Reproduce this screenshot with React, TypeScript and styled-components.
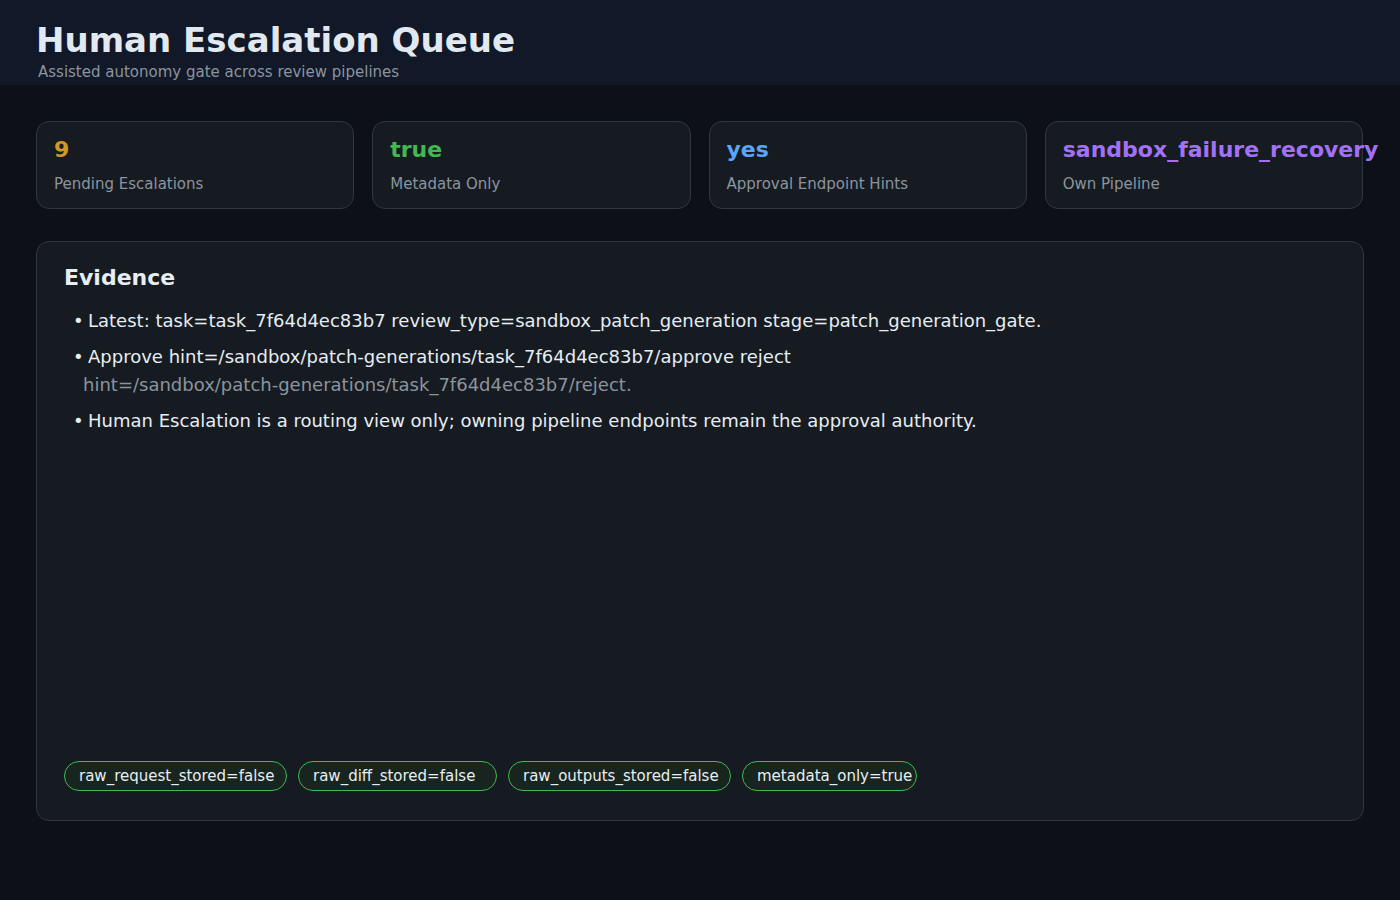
import React from 'react';
import styled, { createGlobalStyle } from 'styled-components';

const GlobalStyle = createGlobalStyle`
  html, body {
    margin: 0;
    padding: 0;
    background: #0d1117;
    color: #e6edf3;
    font-family: "DejaVu Sans", "Liberation Sans", sans-serif;
  }
`;

const stats = [
  { value: '9', label: 'Pending Escalations', tone: '#d29922' },
  { value: 'true', label: 'Metadata Only', tone: '#3fb950' },
  { value: 'yes', label: 'Approval Endpoint Hints', tone: '#58a6ff' },
  { value: 'sandbox_failure_recovery', label: 'Own Pipeline', tone: '#a371f7' },
];

const flags = [
  { text: 'raw_request_stored=false', width: 223 },
  { text: 'raw_diff_stored=false', width: 199 },
  { text: 'raw_outputs_stored=false', width: 223 },
  { text: 'metadata_only=true', width: 175 },
];

const App = () => {
  return (
    <Page>
      <GlobalStyle />
      <Header>
        <Title>Human Escalation Queue</Title>
        <Subtitle>Assisted autonomy gate across review pipelines</Subtitle>
      </Header>
      <Main>
        <StatGrid>
          {stats.map((s) => (
            <StatCard key={s.label}>
              <StatValue $tone={s.tone}>{s.value}</StatValue>
              <StatLabel>{s.label}</StatLabel>
            </StatCard>
          ))}
        </StatGrid>
        <Panel>
          <PanelTitle>Evidence</PanelTitle>
          <EvidenceList>
            <li>
              Latest: task=task_7f64d4ec83b7 review_type=sandbox_patch_generation
              stage=patch_generation_gate.
            </li>
            <li>
              Approve hint=/sandbox/patch-generations/task_7f64d4ec83b7/approve reject
              <Continued>hint=/sandbox/patch-generations/task_7f64d4ec83b7/reject.</Continued>
            </li>
            <li>
              Human Escalation is a routing view only; owning pipeline endpoints remain the
              approval authority.
            </li>
          </EvidenceList>
          <ChipRow>
            {flags.map((f) => (
              <Chip key={f.text} $width={f.width}>
                {f.text}
              </Chip>
            ))}
          </ChipRow>
        </Panel>
      </Main>
    </Page>
  );
};

const Page = styled.div`
  min-height: 900px;
  background: #0d1117;
`;

const Header = styled.header`
  background: #111827;
  height: 85px;
  box-sizing: border-box;
  padding: 19px 36px 0;
`;

const Title = styled.h1`
  margin: 0;
  font-size: 34px;
  line-height: 42px;
  font-weight: 700;
  color: #e2e8f0;
`;

const Subtitle = styled.div`
  margin: 2px 0 0 2px;
  font-size: 15px;
  line-height: 18px;
  color: #8b949e;
`;

const Main = styled.main`
  padding: 36px 36px;
  display: flex;
  flex-direction: column;
  gap: 32px;
`;

const StatGrid = styled.div`
  display: grid;
  grid-template-columns: repeat(4, 1fr);
  gap: 18px;
  padding-right: 1px;
`;

const StatCard = styled.div`
  height: 88px;
  box-sizing: border-box;
  padding: 14px 17px;
  background: #161b22;
  border: 1px solid #30363d;
  border-radius: 13px;
  min-width: 0;
`;

const StatValue = styled.div<{ $tone: string }>`
  font-size: 22px;
  line-height: 28px;
  font-weight: 700;
  color: ${(p) => p.$tone};
  white-space: nowrap;
`;

const StatLabel = styled.div`
  margin-top: 11px;
  font-size: 15px;
  line-height: 18px;
  color: #8b949e;
`;

const Panel = styled.section`
  height: 580px;
  box-sizing: border-box;
  padding: 22px 27px 29px;
  background: #161b22;
  border: 1px solid #30363d;
  border-radius: 13px;
  display: flex;
  flex-direction: column;
`;

const PanelTitle = styled.h2`
  margin: 0;
  font-size: 22px;
  line-height: 28px;
  font-weight: 700;
  color: #e6edf3;
`;

const EvidenceList = styled.ul`
  margin: 15px 0 0;
  padding: 0 0 0 9px;
  list-style: none;
  font-size: 18px;
  line-height: 28px;
  color: #e6edf3;

  li {
    margin-bottom: 8px;
  }

  li::before {
    content: '•';
    display: inline-block;
    width: 15px;
  }
`;

const Continued = styled.span`
  display: block;
  margin-left: 10px;
  color: #8b949e;
`;

const ChipRow = styled.div`
  margin-top: auto;
  display: flex;
  gap: 11px;
`;

const Chip = styled.span<{ $width: number }>`
  width: ${(p) => p.$width}px;
  height: 30px;
  box-sizing: border-box;
  padding: 0 0 0 14px;
  display: inline-flex;
  align-items: center;
  border: 1px solid #3fb950;
  border-radius: 15px;
  background: #18251e;
  font-size: 15px;
  color: #e6edf3;
  white-space: nowrap;
`;

export default App;
